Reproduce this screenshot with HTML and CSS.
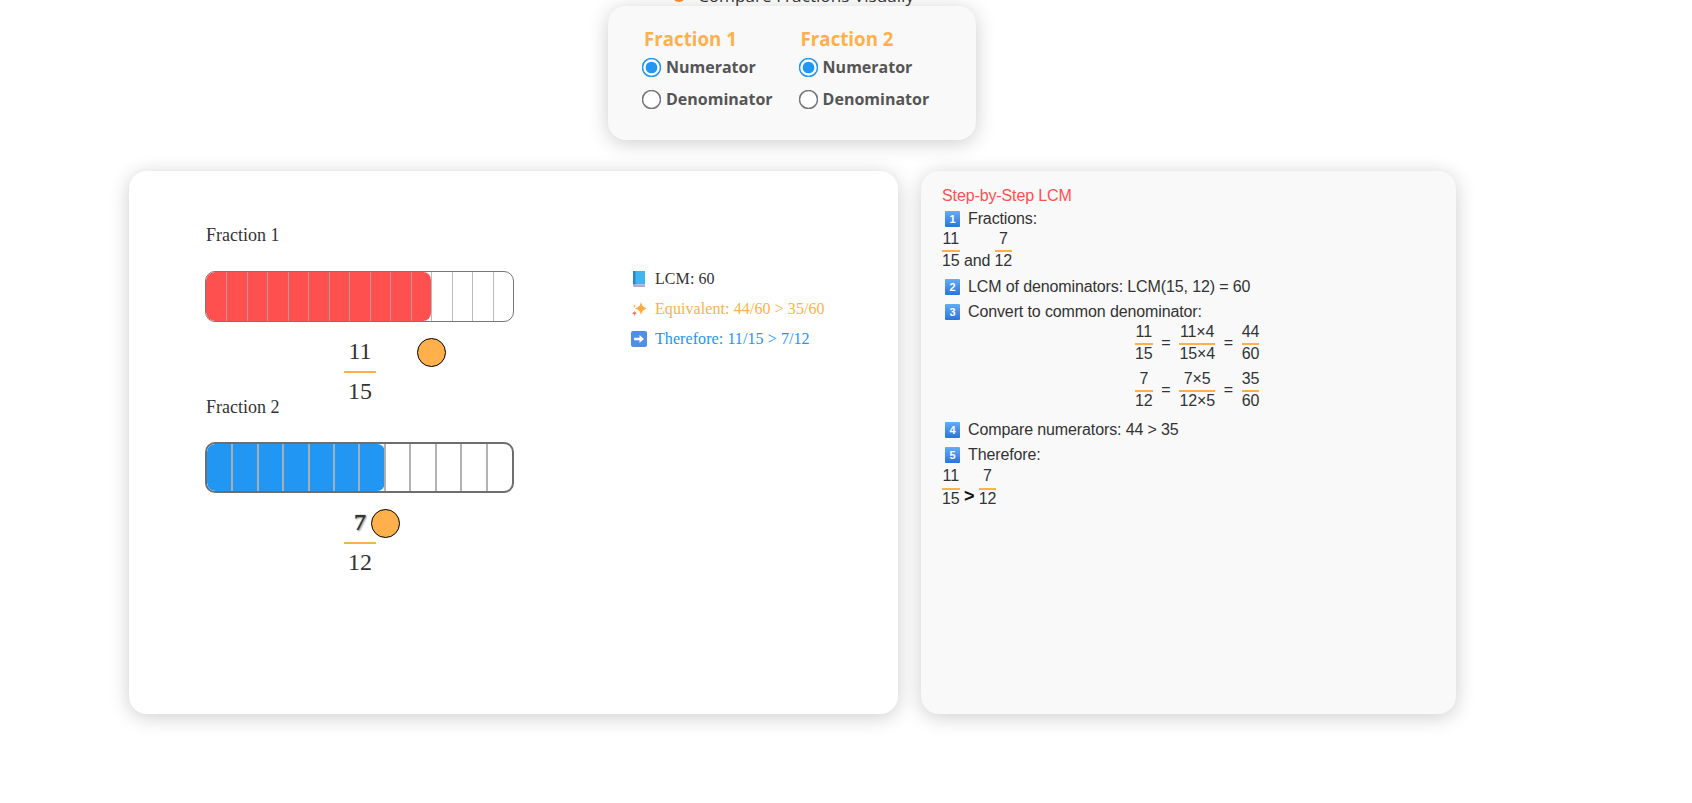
FILE: index.html
```html
<!DOCTYPE html>
<html lang="en">
<head>
  <meta charset="UTF-8">
  <meta name="viewport" content="width=device-width, initial-scale=1">
  <title>Compare Fractions Visually</title>
  <link rel="stylesheet" href="styles.css">
</head>
<body>
  <div class="top">
    <h1 class="page-title"><span class="title-icon"></span>Compare Fractions Visually</h1>

    <div class="controls">
      <div class="control-group">
        <h3>Fraction 1</h3>
        <label><input type="radio" name="f1" checked> Numerator</label>
        <label><input type="radio" name="f1"> Denominator</label>
      </div>
      <div class="control-group">
        <h3>Fraction 2</h3>
        <label><input type="radio" name="f2" checked> Numerator</label>
        <label><input type="radio" name="f2"> Denominator</label>
      </div>
    </div>
  </div>

  <div class="main">
    <div class="card visual">
      <div class="bars">
        <div class="bar-block first">
          <div class="bar-label">Fraction 1</div>
          <div class="bar thin">
            <div class="fill red" style="width: 73.33%"></div>
            <div class="cells c15">
              <i></i><i></i><i></i><i></i><i></i><i></i><i></i><i></i><i></i><i></i><i></i><i></i><i></i><i></i><i></i>
            </div>
          </div>
          <div class="big-frac">
            <div class="num">11</div>
            <div class="den">15</div>
            <span class="knob knob-one"></span>
          </div>
        </div>
        <div class="bar-block">
          <div class="bar-label">Fraction 2</div>
          <div class="bar thick">
            <div class="fill blue" style="width: 58.33%"></div>
            <div class="cells c12">
              <i></i><i></i><i></i><i></i><i></i><i></i><i></i><i></i><i></i><i></i><i></i><i></i>
            </div>
          </div>
          <div class="big-frac">
            <div class="num shadow">7</div>
            <div class="den">12</div>
            <span class="knob knob-two"></span>
          </div>
        </div>
      </div>

      <div class="results">
        <p>
          <svg class="res-icon" viewBox="0 0 16 16">
            <path d="M2 0h12v13.500H2z" fill="#3fb6ee"/>
            <path d="M2 0h2.500v13.500H2z" fill="#2a86c8"/>
            <path d="M2 13.500h12V16H3.200A1.200 1.200 0 0 1 2 14.800z" fill="#b9a7d8"/>
          </svg>LCM: 60
        </p>
        <p class="orange">
          <svg class="res-icon" viewBox="0 0 16 16">
            <path d="M10 .5c.6 4 2 5.700 6 7-4 1.300-5.400 3-6 7-.6-4-2-5.700-6-7 4-1.300 5.400-3 6-7z" fill="#ffa83c"/>
            <path d="M3.500 3c.2 1.200.6 1.700 1.800 2.100-1.200.4-1.600.9-1.800 2.100-.2-1.200-.6-1.700-1.800-2.100C2.900 4.700 3.300 4.200 3.500 3z" fill="#ffc25a"/>
            <path d="M3.500 9.500c.3 1.500.9 2.200 2.500 2.700-1.600.5-2.200 1.200-2.500 2.700-.3-1.500-.9-2.200-2.500-2.700 1.600-.5 2.200-1.200 2.500-2.700z" fill="#f4745c"/>
          </svg>Equivalent: 44/60 &gt; 35/60
        </p>
        <p class="blue-text">
          <svg class="res-icon" viewBox="0 0 16 16">
            <rect width="16" height="16" rx="2" fill="#4f8fe8"/>
            <path d="M3 6.800h5.500V4l4.500 4-4.500 4V9.200H3z" fill="white"/>
          </svg>Therefore: 11/15 &gt; 7/12
        </p>
      </div>
    </div>

    <div class="card steps">
      <div class="steps-title">Step-by-Step LCM</div>

      <div class="step"><span class="key">1</span>Fractions:</div>
      <div class="inline-line">
        <span class="frac"><span>11</span><span>15</span></span> and <span class="frac"><span>7</span><span>12</span></span>
      </div>

      <div class="step spaced"><span class="key">2</span>LCM of denominators: LCM(15, 12) = 60</div>
      <div class="step spaced"><span class="key">3</span>Convert to common denominator:</div>

      <div class="equations">
        <div class="eq">
          <span class="frac"><span>11</span><span>15</span></span><b>=</b>
          <span class="frac"><span>11×4</span><span>15×4</span></span><b>=</b>
          <span class="frac"><span>44</span><span>60</span></span>
        </div>
        <div class="eq">
          <span class="frac"><span>7</span><span>12</span></span><b>=</b>
          <span class="frac"><span>7×5</span><span>12×5</span></span><b>=</b>
          <span class="frac"><span>35</span><span>60</span></span>
        </div>
      </div>

      <div class="step spaced"><span class="key">4</span>Compare numerators: 44 &gt; 35</div>
      <div class="step spaced"><span class="key">5</span>Therefore:</div>
      <div class="inline-line result-line">
        <span class="frac"><span>11</span><span>15</span></span> <strong>&gt;</strong> <span class="frac"><span>7</span><span>12</span></span>
      </div>
    </div>
  </div>
</body>
</html>
```

FILE: styles.css
```css
html, body {
  height: 100%;
}
body {
  margin: 0;
  background: white;
  color: #333;
  font-family: "Liberation Sans", Arial, sans-serif;
}
.top {
  width: 1584px;
}
.page-title {
  margin: -15px 0 0;
  padding-left: 2px;
  height: 21px;
  text-align: center;
  font-family: "Open Sans", "Noto Sans", sans-serif;
  font-size: 17.2px;
  font-weight: normal;
  line-height: 21px;
}
.title-icon {
  display: inline-block;
  width: 14px;
  height: 14px;
  margin-right: 12px;
  border-radius: 50%;
  background: #f08a24;
}

.controls {
  display: flex;
  gap: 26px;
  width: 368px;
  height: 134px;
  box-sizing: border-box;
  margin: 0 auto;
  padding: 21px 34px;
  background: #f9f9f9;
  border-radius: 18px;
  box-shadow: 0 3px 20px rgba(0, 0, 0, 0.2);
  font-family: "Open Sans", "Noto Sans", sans-serif;
}
.control-group h3 {
  margin: 0;
  padding-left: 2px;
  color: #ffb04a;
  font-size: 18.7px;
  line-height: 24px;
}
.control-group label {
  display: flex;
  align-items: center;
  height: 32px;
  color: #555;
  font-size: 16px;
  font-weight: bold;
}
.control-group input {
  width: 13px;
  height: 13px;
  margin: 0 8px 0 3px;
  transform: scale(1.5);
  accent-color: #2196f3;
}

.main {
  display: flex;
  gap: 23px;
  margin: 31px 0 0 129px;
}
.card {
  height: 543px;
  box-sizing: border-box;
  border-radius: 18px;
  box-shadow: 0 3px 20px rgba(0, 0, 0, 0.2);
}

.visual {
  display: flex;
  width: 769px;
  padding: 0 0 0 76px;
  background: white;
  font-family: "Liberation Serif", "Times New Roman", serif;
}
.bars {
  width: 309px;
}
.bar-block {
  height: 171px;
}
.bar-block.first {
  padding-top: 54px;
}
.bar-label {
  height: 46px;
  padding-left: 1px;
  font-size: 18px;
  line-height: 20px;
}
.bar-block + .bar-block .bar-label {
  height: 45px;
  padding-top: 1px;
}
.bar {
  position: relative;
  height: 51px;
  box-sizing: border-box;
  border: 1px solid #777;
  border-radius: 10px;
  overflow: hidden;
}
.bar.thick {
  border-width: 2px;
  border-color: #6e6e6e;
}
.fill {
  height: 100%;
  border-radius: 8px;
}
.fill.red { background: #ff5050; }
.fill.blue { background: #2196f3; }
.cells {
  position: absolute;
  inset: 0;
  display: grid;
}
.cells.c15 { grid-template-columns: repeat(15, 1fr); }
.cells.c12 { grid-template-columns: repeat(12, 1fr); }
.cells i {
  border-left: 1px solid rgba(170, 170, 170, 0.8);
}
.thick .cells i {
  border-left: 2px solid rgba(175, 175, 175, 0.95);
  margin-left: -1px;
}
.cells i:first-child,
.thick .cells i:first-child {
  border-left: none;
}

.big-frac {
  position: relative;
  width: 32px;
  margin: 13px 0 0 139px;
  text-align: center;
  font-size: 24px;
  line-height: 32px;
}
.big-frac .num {
  height: 36px;
  border-bottom: 2px solid #ffb04a;
}
.big-frac .den {
  line-height: 30px;
  padding-top: 3px;
}
.big-frac .shadow {
  text-shadow: 1px 1px 2px rgba(0, 0, 0, 0.6), 0 0 1px #333;
}
.knob {
  position: absolute;
  top: 3px;
  width: 27px;
  height: 27px;
  border: 1px solid black;
  border-radius: 50%;
  background: #ffb04a;
}
.knob-one { left: 73px; }
.knob-two { left: 27px; }

.results {
  margin: 98px 0 0 117px;
  font-size: 16px;
  letter-spacing: 0.08px;
}
.results p {
  display: flex;
  align-items: center;
  margin: 0 0 10px;
  height: 20px;
  line-height: 20px;
}
.orange { color: #ffb04a; }
.blue-text { color: #2196f3; }
.res-icon {
  width: 16px;
  height: 16px;
  margin-right: 8px;
}

.steps {
  width: 535px;
  padding: 16px 21px;
  background: #f9f9f9;
  font-size: 16px;
  line-height: 18px;
  letter-spacing: -0.12px;
}
.steps-title {
  color: #ff5050;
  margin-bottom: 5px;
}
.step {
  display: flex;
  align-items: center;
  height: 18px;
  padding-left: 3px;
}
.step.spaced {
  margin-top: 7px;
}
.key {
  width: 15px;
  height: 16px;
  margin-right: 8px;
  border-radius: 1px;
  background: linear-gradient(#62aef6, #2d73dc);
  color: white;
  font-size: 11px;
  font-weight: bold;
  line-height: 16px;
  text-align: center;
}
.frac {
  display: inline-block;
  vertical-align: baseline;
  text-align: center;
}
.frac span {
  display: block;
  line-height: 18.4px;
}
.frac span:first-child {
  padding-bottom: 2px;
  border-bottom: 2px solid #ffb04a;
}
.inline-line {
  margin-top: 2px;
}
.inline-line.result-line {
  margin-top: 3px;
}
.inline-line strong {
  position: relative;
  top: -2px;
  font-size: 18px;
  color: #111;
}
.equations {
  display: flex;
  flex-direction: column;
  gap: 6px;
  margin: 2px 0 11px 193px;
}
.eq {
  display: flex;
  align-items: center;
  gap: 8.8px;
}
.eq b {
  font-weight: normal;
}
```
